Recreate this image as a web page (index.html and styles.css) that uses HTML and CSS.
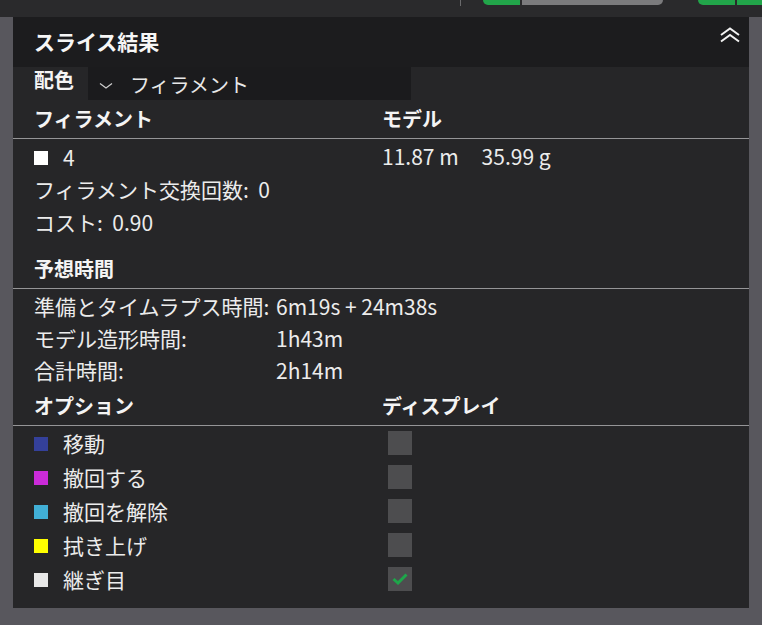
FILE: index.html
```html
<!DOCTYPE html>
<html lang="ja">
<head>
<meta charset="utf-8">
<title>スライス結果</title>
<link rel="stylesheet" href="styles.css">
</head>
<body>
<div class="topbar">
  <span class="tb-divider"></span>
  <span class="tb-pill tb-green tb-left"></span>
  <span class="tb-pill tb-grey"></span>
  <span class="tb-pill tb-green tb-right-a"></span>
  <span class="tb-pill tb-green tb-right-b"></span>
</div>
<div class="panel">
  <div class="panel-head">
    <span class="panel-title">スライス結果</span>
    <svg class="collapse" width="22" height="16" viewBox="0 0 22 16">
      <path d="M2 8 L11 1.5 L20 8 M2 14.5 L11 8 L20 14.5" fill="none" stroke="#f2f2f2" stroke-width="2"/>
    </svg>
  </div>

  <div class="scheme-row">
    <span class="scheme-label">配色</span>
    <div class="select">
      <svg class="select-arrow" width="14" height="8" viewBox="0 0 14 8">
        <path d="M1 1.5 L7 6 L13 1.5" fill="none" stroke="#cfcfcf" stroke-width="1.2"/>
      </svg>
      <span>フィラメント</span>
    </div>
  </div>

  <div class="sec-head grid2">
    <span>フィラメント</span>
    <span>モデル</span>
  </div>
  <div class="row grid2">
    <span class="item"><i class="swatch sw-white"></i>4</span>
    <span class="usage"><span>11.87 m</span><span>35.99 g</span></span>
  </div>
  <div class="row">フィラメント交換回数:&nbsp;&nbsp;0</div>
  <div class="row">コスト:&nbsp;&nbsp;0.90</div>

  <div class="sec-head sec-time">
    <span>予想時間</span>
  </div>
  <div class="row time"><span>準備とタイムラプス時間:</span><span>6m19s + 24m38s</span></div>
  <div class="row time"><span>モデル造形時間:</span><span>1h43m</span></div>
  <div class="row time"><span>合計時間:</span><span>2h14m</span></div>

  <div class="sec-head sec-opt grid2">
    <span>オプション</span>
    <span>ディスプレイ</span>
  </div>
  <div class="opt grid2">
    <span class="item"><i class="swatch sw-travel"></i>移動</span>
    <span class="check"></span>
  </div>
  <div class="opt grid2">
    <span class="item"><i class="swatch sw-retract"></i>撤回する</span>
    <span class="check"></span>
  </div>
  <div class="opt grid2">
    <span class="item"><i class="swatch sw-unretract"></i>撤回を解除</span>
    <span class="check"></span>
  </div>
  <div class="opt grid2">
    <span class="item"><i class="swatch sw-wipe"></i>拭き上げ</span>
    <span class="check"></span>
  </div>
  <div class="opt grid2">
    <span class="item"><i class="swatch sw-seam"></i>継ぎ目</span>
    <span class="check on">
      <svg width="16" height="12" viewBox="0 0 16 12">
        <path d="M1.5 6 L6 10 L14.5 1.5" fill="none" stroke="#1ea64a" stroke-width="3"/>
      </svg>
    </span>
  </div>
</div>
</body>
</html>
```

FILE: styles.css
```css
html, body {
  margin: 0;
  padding: 0;
}

body {
  background: #58575d;
  width: 762px;
  height: 625px;
  overflow: hidden;
  font-family: "Noto Sans CJK JP", "Noto Sans", sans-serif;
  font-size: 21px;
  color: #ececec;
}

/* toolbar strip along the top */
.topbar {
  height: 17px;
  background: #2a2a2c;
  display: flex;
  align-items: flex-start;
  padding-left: 460px;
  box-sizing: border-box;
  overflow: hidden;
}

.tb-divider {
  width: 1px;
  height: 6px;
  background: #6a6a6c;
}

.tb-pill {
  height: 5px;
}

.tb-green { background: #22a54a; }
.tb-grey  { background: #7b7b7d; }

.tb-left {
  width: 37px;
  margin-left: 22px;
  border-bottom-left-radius: 12px;
}

.tb-grey {
  width: 142px;
  margin-left: 2px;
  border-bottom-right-radius: 12px;
}

.tb-right-a {
  width: 37px;
  margin-left: 35px;
  border-bottom-left-radius: 12px;
}

.tb-right-b {
  width: 25px;
  margin-left: 2px;
}

/* result panel */
.panel {
  margin: 0 13px;
  width: 736px;
  height: 591px;
  background: #262628;
}

.panel-head {
  height: 50px;
  background: #1c1c1e;
  display: flex;
  align-items: center;
  justify-content: space-between;
  padding: 0 8px 0 21px;
}

.panel-title {
  font-size: 21px;
  font-weight: 700;
  color: #f6f6f6;
  line-height: 1;
  margin-top: -1px;
}

.collapse {
  margin-top: -14px;
}

.scheme-row {
  height: 33px;
  display: flex;
  align-items: stretch;
  padding-left: 21px;
}

.scheme-label {
  font-size: 20px;
  font-weight: 700;
  color: #f4f4f4;
  width: 54px;
  line-height: 26px;
}

.select {
  width: 323px;
  background: #1b1b1d;
  display: flex;
  align-items: center;
  padding-left: 11px;
  box-sizing: border-box;
  font-size: 20px;
  color: #e8e8e8;
  padding-top: 2px;
}

.select-arrow {
  margin-right: 17px;
  margin-top: 2px;
}

.grid2 {
  display: grid;
  grid-template-columns: 348px 1fr;
}

.sec-head {
  height: 38px;
  line-height: 38px;
  padding-left: 21px;
  font-size: 20px;
  font-weight: 700;
  color: #f4f4f4;
  border-bottom: 1px solid #959597;
  margin-bottom: 1px;
}

.sec-time {
  margin-top: 11px;
}

.sec-opt {
  margin-top: 1px;
}

.row {
  height: 33px;
  line-height: 33px;
  padding-left: 21px;
}

.row.time {
  height: 32px;
  line-height: 32px;
  display: grid;
  grid-template-columns: 242px 1fr;
}

.item {
  display: flex;
  align-items: center;
  line-height: 28px;
}

.swatch {
  width: 14px;
  height: 14px;
  margin-right: 15px;
  flex: none;
  margin-top: 2px;
}

.sw-white     { background: #ffffff; }
.sw-travel    { background: #34409a; }
.sw-retract   { background: #cb2bd9; }
.sw-unretract { background: #41afd6; }
.sw-wipe      { background: #ffff00; }
.sw-seam      { background: #e8e8e8; }

.usage {
  display: flex;
  gap: 23px;
}

.opt {
  height: 34px;
  box-sizing: border-box;
  padding: 0 0 3px 21px;
  align-items: center;
}

.check {
  width: 24px;
  height: 24px;
  background: #4d4d4f;
  margin-left: 6px;
  display: flex;
  align-items: center;
  justify-content: center;
}
```
